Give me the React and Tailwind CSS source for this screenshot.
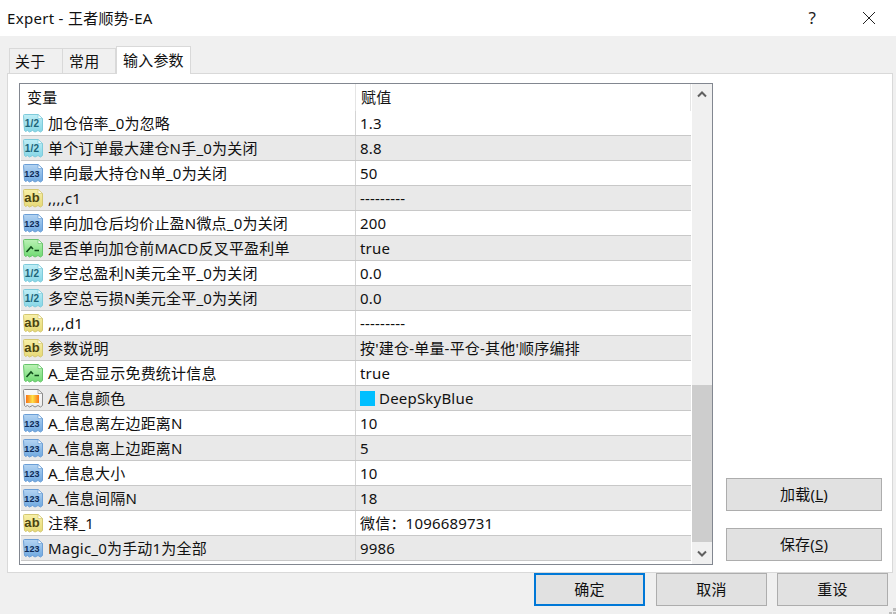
import React from 'react';

const font = { fontFamily: '"Noto Sans", "Noto Sans CJK SC", sans-serif' };

const rows = [
  ['half', '加仓倍率_0为忽略', '1.3'],
  ['half', '单个订单最大建仓N手_0为关闭', '8.8'],
  ['int', '单向最大持仓N单_0为关闭', '50'],
  ['str', ',,,,c1', '---------'],
  ['int', '单向加仓后均价止盈N微点_0为关闭', '200'],
  ['bool', '是否单向加仓前MACD反叉平盈利单', 'true'],
  ['half', '多空总盈利N美元全平_0为关闭', '0.0'],
  ['half', '多空总亏损N美元全平_0为关闭', '0.0'],
  ['str', ',,,,d1', '---------'],
  ['str', '参数说明', "按'建仓-单量-平仓-其他'顺序编排"],
  ['bool', 'A_是否显示免费统计信息', 'true'],
  ['color', 'A_信息颜色', 'DeepSkyBlue'],
  ['int', 'A_信息离左边距离N', '10'],
  ['int', 'A_信息离上边距离N', '5'],
  ['int', 'A_信息大小', '10'],
  ['int', 'A_信息间隔N', '18'],
  ['str', '注释_1', '微信：1096689731'],
  ['int', 'Magic_0为手动1为全部', '9986'],
];

const palette = {
  half: { top: '#bfeef6', bottom: '#86d6e6', edge: '#7fcbdb', ink: '#1c6478', label: '1/2' },
  int: { top: '#b4d4f2', bottom: '#6fa8e0', edge: '#6c9fd6', ink: '#0c2a56', label: '123' },
  str: { top: '#f8f0a8', bottom: '#e6d976', edge: '#d4c872', ink: '#4c4410', label: 'ab' },
  bool: { top: '#bcf2b6', bottom: '#6fda72', edge: '#68c46c', ink: '#0f4d1a' },
  color: { top: '#fafafa', bottom: '#ececec', edge: '#8a8a8a', ink: '#000' },
};

function TypeIcon({ type }) {
  const c = palette[type];
  const id = 'grad-' + type;
  return (
    <svg width="22" height="21" viewBox="0 0 22 21" className="shrink-0">
      <defs>
        <linearGradient id={id} x1="0" y1="0" x2="0" y2="1">
          <stop offset="0" stopColor={c.top} />
          <stop offset="1" stopColor={c.bottom} />
        </linearGradient>
        <linearGradient id="flame" x1="0" y1="0" x2="1" y2="0">
          <stop offset="0" stopColor="#f97316" />
          <stop offset="0.5" stopColor="#fde047" />
          <stop offset="1" stopColor="#f97316" />
        </linearGradient>
      </defs>
      <path
        d="M1.5 2.5 a1 1 0 0 1 1-1 H16 L20.5 5.5 V17.5 l-2 1.5 -2.5-1.5 -3 1.5 -2.5-1.5 -3 1.5 -2-1.5 -2 1 -1-1 Z"
        fill={`url(#${id})`}
        stroke={c.edge}
      />
      <path d="M16 1.5 V5.5 H20.5 Z" fill="#fff" stroke={c.edge} strokeWidth="0.7" />
      {c.label && (
        <text
          x="10"
          y={type === 'str' ? 14 : 14}
          textAnchor="middle"
          fontSize={type === 'str' ? 13 : type === 'int' ? 9 : 10}
          fontWeight="700"
          fill={c.ink}
          fontFamily='"Liberation Sans", sans-serif'
        >
          {c.label}
        </text>
      )}
      {type === 'bool' && (
        <path d="M4.5 14 L9 9 L11 11 M12.5 12.5 H17" fill="none" stroke={c.ink} strokeWidth="1.6" />
      )}
      {type === 'color' && <rect x="4" y="7" width="13" height="8" fill="url(#flame)" />}
    </svg>
  );
}

function Row({ type, name, value, striped }) {
  return (
    <div className={`flex h-[25px] border-b border-[#c8c8c8] ${striped ? 'bg-[#e9e9e9]' : 'bg-white'}`}>
      <div className="flex w-[335px] items-center gap-[4px] pl-[1px] border-r border-[#d4d4d4]">
        <TypeIcon type={type} />
        <span className="text-[15px] leading-none tracking-[0.2px] text-[#111] whitespace-nowrap">{name}</span>
      </div>
      <div className="flex flex-1 items-center gap-[4px] pl-[4px] text-[15px] leading-none tracking-[0.2px] text-[#111]">
        {type === 'color' && <span className="h-[15px] w-[15px] bg-[#00bfff]" />}
        <span className="whitespace-nowrap">{value}</span>
      </div>
    </div>
  );
}

function Btn({ label, hotkey, className = '' }) {
  return (
    <button className={`flex h-[33px] items-center justify-center border border-[#adadad] bg-[#e1e1e1] text-[15px] tracking-[0.2px] text-[#111] ${className}`}>
      {label}
      {hotkey && (
        <span>
          (<span className="underline">{hotkey}</span>)
        </span>
      )}
    </button>
  );
}

export default function App() {
  return (
    <div className="flex h-[614px] w-[896px] flex-col overflow-hidden bg-[#f0f0f0] tracking-[0.2px]" style={font}>
      {/* title bar */}
      <div className="flex h-[36px] items-center justify-between bg-white pl-[7px] pr-[20px]">
        <span className="text-[15px] tracking-[0.3px] text-[#111]">Expert - 王者顺势-EA</span>
        <div className="flex items-center gap-[46px]">
          <span className="text-[17px] text-[#222]">?</span>
          <svg width="14" height="14" viewBox="0 0 14 14">
            <path d="M1 1 L13 13 M13 1 L1 13" stroke="#222" strokeWidth="1" />
          </svg>
        </div>
      </div>

      {/* tabs */}
      <div className="flex h-[37px] items-end pl-[9px]">
        <div className="flex h-[25px] w-[54px] items-center border border-b-0 border-[#d9d9d9] pl-[5px] text-[15px] text-[#111]">关于</div>
        <div className="flex h-[25px] w-[53px] items-center border border-b-0 border-l-0 border-[#d9d9d9] pl-[6px] text-[15px] text-[#111]">常用</div>
        <div className="relative top-[1px] flex h-[28px] w-[75px] items-center border border-b-0 border-[#d9d9d9] bg-white pl-[6px] text-[15px] text-[#111]">输入参数</div>
      </div>

      {/* panel */}
      <div className="ml-[7px] flex h-[500px] w-[886px] gap-[13px] border border-[#d9d9d9] bg-white pl-[11px] pt-[9px]">
        <div className="flex h-[482px] w-[694px] border border-[#828790] pl-[1px]">
          <div className="w-[670px]">
            <div className="flex h-[27px]">
              <div className="flex w-[335px] items-center pl-[6px] text-[15px] text-[#111] border-r border-[#e5e5e5]">变量</div>
              <div className="flex flex-1 items-center pl-[5px] text-[15px] text-[#111] border-r border-[#e5e5e5]">赋值</div>
            </div>
            {rows.map((r, i) => (
              <Row key={i} type={r[0]} name={r[1]} value={r[2]} striped={i % 2 === 1} />
            ))}
          </div>
          {/* scrollbar */}
          <div className="ml-[1px] flex w-[20px] flex-col bg-[#f0f0f0]">
            <div className="flex h-[20px] items-center justify-center">
              <svg width="10" height="7" viewBox="0 0 10 7">
                <path d="M1 5.5 L5 1.5 L9 5.5" fill="none" stroke="#606060" strokeWidth="2" />
              </svg>
            </div>
            <div className="flex-1" />
            <div className="h-[157px] bg-[#cdcdcd]" />
            <div className="flex h-[22px] items-center justify-center">
              <svg width="10" height="7" viewBox="0 0 10 7">
                <path d="M1 1.5 L5 5.5 L9 1.5" fill="none" stroke="#606060" strokeWidth="2" />
              </svg>
            </div>
          </div>
        </div>
        <div className="flex h-[478px] flex-col justify-end gap-[17px]">
          <Btn label="加载" hotkey="L" className="w-[156px]" />
          <Btn label="保存" hotkey="S" className="w-[156px]" />
        </div>
      </div>

      {/* footer */}
      <div className="relative flex justify-end gap-[10px] pr-[8px] pt-0">
        <Btn label="确定" className="mr-[1px] w-[111px] !border-2 !border-[#0078d7]" />
        <Btn label="取消" className="w-[111px]" />
        <Btn label="重设" className="w-[111px]" />
        <svg width="7" height="7" viewBox="0 0 7 7" className="absolute right-0 top-[35px]">
          <path d="M0 4h3v3H0zM4 4h3v3H4zM4 0h3v3H4z" fill="#bdbdbd" />
        </svg>
      </div>
    </div>
  );
}
